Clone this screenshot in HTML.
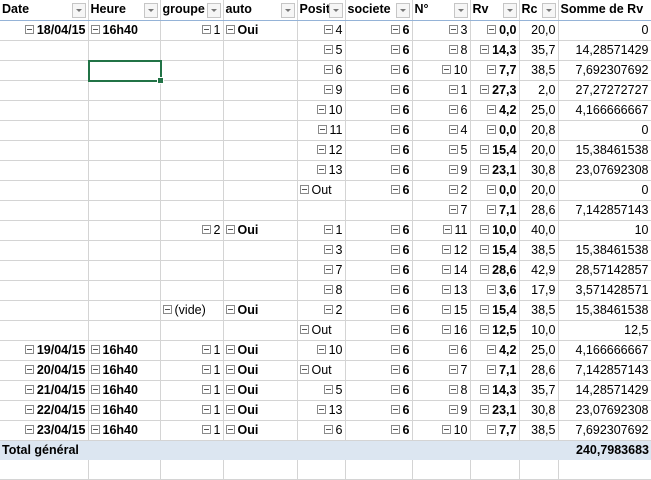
<!DOCTYPE html>
<html><head><meta charset="utf-8">
<style>
body{margin:0;width:651px;height:464px;overflow:hidden;background:#fff;font-family:"Liberation Sans",Arial,sans-serif;font-size:12.5px;color:#000;position:relative}
table{border-collapse:collapse;table-layout:fixed;position:absolute;left:0;top:0;width:651px}
td{height:19px;border-right:1px solid #d4d4d4;border-bottom:1px solid #d4d4d4;padding:0 2px;white-space:nowrap;overflow:hidden;text-align:right;line-height:19px}
td.l{text-align:left}
td.b{font-weight:bold}
tr.h td{font-weight:bold;text-align:left;border-bottom:1px solid #95b3d7;position:relative}
tr.g td{border-top:1px solid #a7bfdc}
tr.t td{background:#dce6f1;font-weight:bold;border-top:1px solid #95b3d7;border-bottom:none;border-right:none}
.m{display:inline-block;width:7px;height:7px;border:1px solid #8a8a8a;position:relative;margin-right:3px;vertical-align:0px;background:#fff}
.m:after{content:"";position:absolute;left:1px;right:1px;top:3px;height:1px;background:#555}
.dd{position:absolute;right:2px;top:3px;width:12px;height:13px;border:1px solid #c6c6c6;background:#f6f6f6}
.dd:after{content:"";position:absolute;left:3px;top:5px;border-left:3px solid transparent;border-right:3px solid transparent;border-top:3px solid #777}
.sel{position:absolute;left:88px;top:60px;width:70px;height:18px;border:2px solid #217346}
.sel:after{content:"";position:absolute;right:-4px;bottom:-4px;width:5px;height:5px;background:#217346;border:1px solid #fff}
</style></head><body>
<table>
<colgroup><col style="width:88px"><col style="width:72px"><col style="width:63px"><col style="width:74px"><col style="width:48px"><col style="width:67px"><col style="width:58px"><col style="width:49px"><col style="width:39px"><col style="width:93px"></colgroup>
<tr class="h" style="height:20px"><td>Date<span class="dd"></span></td><td>Heure<span class="dd"></span></td><td>groupe<span class="dd"></span></td><td>auto<span class="dd"></span></td><td>Posit<span class="dd"></span></td><td>societe<span class="dd"></span></td><td>N°<span class="dd"></span></td><td>Rv<span class="dd"></span></td><td>Rc<span class="dd"></span></td><td>Somme de Rv</td></tr>
<tr><td class="b"><span class="m"></span>18/04/15</td><td class="l b"><span class="m"></span>16h40</td><td><span class="m"></span>1</td><td class="l b"><span class="m"></span>Oui</td><td><span class="m"></span>4</td><td class="b"><span class="m"></span>6</td><td><span class="m"></span>3</td><td class="b"><span class="m"></span>0,0</td><td>20,0</td><td>0</td></tr>
<tr><td></td><td></td><td></td><td></td><td><span class="m"></span>5</td><td class="b"><span class="m"></span>6</td><td><span class="m"></span>8</td><td class="b"><span class="m"></span>14,3</td><td>35,7</td><td>14,28571429</td></tr>
<tr><td></td><td></td><td></td><td></td><td><span class="m"></span>6</td><td class="b"><span class="m"></span>6</td><td><span class="m"></span>10</td><td class="b"><span class="m"></span>7,7</td><td>38,5</td><td>7,692307692</td></tr>
<tr><td></td><td></td><td></td><td></td><td><span class="m"></span>9</td><td class="b"><span class="m"></span>6</td><td><span class="m"></span>1</td><td class="b"><span class="m"></span>27,3</td><td>2,0</td><td>27,27272727</td></tr>
<tr><td></td><td></td><td></td><td></td><td><span class="m"></span>10</td><td class="b"><span class="m"></span>6</td><td><span class="m"></span>6</td><td class="b"><span class="m"></span>4,2</td><td>25,0</td><td>4,166666667</td></tr>
<tr><td></td><td></td><td></td><td></td><td><span class="m"></span>11</td><td class="b"><span class="m"></span>6</td><td><span class="m"></span>4</td><td class="b"><span class="m"></span>0,0</td><td>20,8</td><td>0</td></tr>
<tr><td></td><td></td><td></td><td></td><td><span class="m"></span>12</td><td class="b"><span class="m"></span>6</td><td><span class="m"></span>5</td><td class="b"><span class="m"></span>15,4</td><td>20,0</td><td>15,38461538</td></tr>
<tr><td></td><td></td><td></td><td></td><td><span class="m"></span>13</td><td class="b"><span class="m"></span>6</td><td><span class="m"></span>9</td><td class="b"><span class="m"></span>23,1</td><td>30,8</td><td>23,07692308</td></tr>
<tr><td></td><td></td><td></td><td></td><td class="l"><span class="m"></span>Out</td><td class="b"><span class="m"></span>6</td><td><span class="m"></span>2</td><td class="b"><span class="m"></span>0,0</td><td>20,0</td><td>0</td></tr>
<tr><td></td><td></td><td></td><td></td><td></td><td></td><td><span class="m"></span>7</td><td class="b"><span class="m"></span>7,1</td><td>28,6</td><td>7,142857143</td></tr>
<tr><td></td><td></td><td><span class="m"></span>2</td><td class="l b"><span class="m"></span>Oui</td><td><span class="m"></span>1</td><td class="b"><span class="m"></span>6</td><td><span class="m"></span>11</td><td class="b"><span class="m"></span>10,0</td><td>40,0</td><td>10</td></tr>
<tr><td></td><td></td><td></td><td></td><td><span class="m"></span>3</td><td class="b"><span class="m"></span>6</td><td><span class="m"></span>12</td><td class="b"><span class="m"></span>15,4</td><td>38,5</td><td>15,38461538</td></tr>
<tr><td></td><td></td><td></td><td></td><td><span class="m"></span>7</td><td class="b"><span class="m"></span>6</td><td><span class="m"></span>14</td><td class="b"><span class="m"></span>28,6</td><td>42,9</td><td>28,57142857</td></tr>
<tr><td></td><td></td><td></td><td></td><td><span class="m"></span>8</td><td class="b"><span class="m"></span>6</td><td><span class="m"></span>13</td><td class="b"><span class="m"></span>3,6</td><td>17,9</td><td>3,571428571</td></tr>
<tr><td></td><td></td><td class="l"><span class="m"></span>(vide)</td><td class="l b"><span class="m"></span>Oui</td><td><span class="m"></span>2</td><td class="b"><span class="m"></span>6</td><td><span class="m"></span>15</td><td class="b"><span class="m"></span>15,4</td><td>38,5</td><td>15,38461538</td></tr>
<tr><td></td><td></td><td></td><td></td><td class="l"><span class="m"></span>Out</td><td class="b"><span class="m"></span>6</td><td><span class="m"></span>16</td><td class="b"><span class="m"></span>12,5</td><td>10,0</td><td>12,5</td></tr>
<tr class="g"><td class="b"><span class="m"></span>19/04/15</td><td class="l b"><span class="m"></span>16h40</td><td><span class="m"></span>1</td><td class="l b"><span class="m"></span>Oui</td><td><span class="m"></span>10</td><td class="b"><span class="m"></span>6</td><td><span class="m"></span>6</td><td class="b"><span class="m"></span>4,2</td><td>25,0</td><td>4,166666667</td></tr>
<tr class="g"><td class="b"><span class="m"></span>20/04/15</td><td class="l b"><span class="m"></span>16h40</td><td><span class="m"></span>1</td><td class="l b"><span class="m"></span>Oui</td><td class="l"><span class="m"></span>Out</td><td class="b"><span class="m"></span>6</td><td><span class="m"></span>7</td><td class="b"><span class="m"></span>7,1</td><td>28,6</td><td>7,142857143</td></tr>
<tr class="g"><td class="b"><span class="m"></span>21/04/15</td><td class="l b"><span class="m"></span>16h40</td><td><span class="m"></span>1</td><td class="l b"><span class="m"></span>Oui</td><td><span class="m"></span>5</td><td class="b"><span class="m"></span>6</td><td><span class="m"></span>8</td><td class="b"><span class="m"></span>14,3</td><td>35,7</td><td>14,28571429</td></tr>
<tr class="g"><td class="b"><span class="m"></span>22/04/15</td><td class="l b"><span class="m"></span>16h40</td><td><span class="m"></span>1</td><td class="l b"><span class="m"></span>Oui</td><td><span class="m"></span>13</td><td class="b"><span class="m"></span>6</td><td><span class="m"></span>9</td><td class="b"><span class="m"></span>23,1</td><td>30,8</td><td>23,07692308</td></tr>
<tr class="g"><td class="b"><span class="m"></span>23/04/15</td><td class="l b"><span class="m"></span>16h40</td><td><span class="m"></span>1</td><td class="l b"><span class="m"></span>Oui</td><td><span class="m"></span>6</td><td class="b"><span class="m"></span>6</td><td><span class="m"></span>10</td><td class="b"><span class="m"></span>7,7</td><td>38,5</td><td>7,692307692</td></tr>
<tr class="t"><td class="l" colspan="3">Total général</td><td></td><td></td><td></td><td></td><td></td><td></td><td>240,7983683</td></tr>
<tr><td></td><td></td><td></td><td></td><td></td><td></td><td></td><td></td><td></td><td></td></tr>
</table>
<div class="sel"></div>
</body></html>
